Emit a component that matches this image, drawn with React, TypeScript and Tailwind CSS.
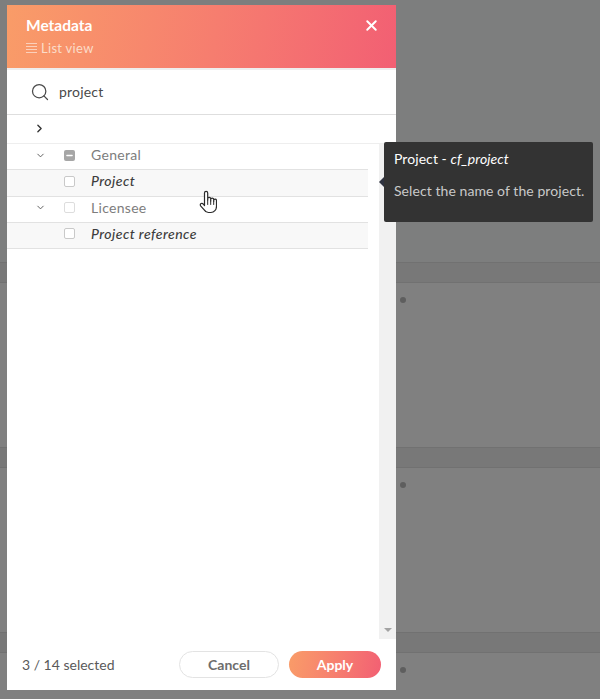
import { ChevronDown, ChevronRight, Minus, Search, X } from 'lucide-react';

const font = "font-['Lato','Noto_Sans',sans-serif]";

// greyed page behind the dialog
const BackgroundSection = () => (
  <div className="h-[185px]">
    <div className="h-[21px] border-y border-[#717171] bg-[#787878]" />
    <div className="flex pl-[400px] pt-[14px]">
      <span className="h-[6px] w-[6px] rounded-full bg-[#5e5e5e]" />
    </div>
  </div>
);

const HandCursor = () => (
  <svg width="18" height="25" viewBox="0 0 18 25" className="block">
    <path
      d="M5.5 15.5V3a1.6 1.6 0 0 1 3.2 0v7m0-1.2a1.5 1.5 0 0 1 3 0V11m0-1.4a1.5 1.5 0 0 1 3 0v1.6m0-.6a1.4 1.4 0 0 1 2.8 0v5.6c0 3.6-2.4 6.3-5.6 6.3H9.4c-2 0-3.2-.9-4.2-2.6L1.6 15.8c-.5-.9-.2-1.8.5-2.2.7-.4 1.6-.2 2.2.5l1.2 1.4"
      fill="#fff"
      stroke="#2b2b2b"
      strokeWidth="1.2"
      strokeLinecap="round"
      strokeLinejoin="round"
    />
    <path d="M8.7 10v4.5M11.7 11v3.5M14.7 11.2v3.3" stroke="#2b2b2b" strokeWidth="1" strokeLinecap="round" />
  </svg>
);

const Checkbox = ({ muted, mixed }: { muted?: boolean; mixed?: boolean }) =>
  mixed ? (
    <span className="flex h-[11px] w-[11px] items-center justify-center rounded-[2px] bg-[#a6a6a6]">
      <Minus className="h-[9px] w-[9px] text-white" strokeWidth={3.5} />
    </span>
  ) : (
    <span className={`h-[11px] w-[11px] rounded-[2px] border bg-white ${muted ? 'border-[#dddddd]' : 'border-[#c9c9c9]'}`} />
  );

const GroupRow = ({ label, mixed }: { label: string; mixed?: boolean }) => (
  <div className="flex h-[26.25px] items-center border-b border-[#e2e2e2] pb-[3px]">
    <ChevronDown className="ml-[28px] h-[11px] w-[11px] text-[#555555]" strokeWidth={2} />
    <div className="ml-[18px] flex w-[11px]">
      <Checkbox mixed={mixed} muted />
    </div>
    <span className="mb-[1px] ml-[16px] text-[14px] tracking-[0.3px] text-[#7d7d7d]">{label}</span>
  </div>
);

const FieldRow = ({ label }: { label: string }) => (
  <div className="flex h-[26.25px] items-center border-b border-[#e2e2e2] bg-[#f8f8f8] pb-[3px] pl-[57px]">
    <Checkbox />
    <span className="mb-[1px] ml-[16px] text-[14px] font-medium italic tracking-[0.45px] text-[#3d3d3d]">{label}</span>
  </div>
);

export default function App() {
  return (
    <div className={`relative h-[699px] w-[600px] overflow-hidden bg-[#808080] ${font}`}>
      <div className="h-[262px] bg-[#7d7e7e]" />
      <BackgroundSection />
      <BackgroundSection />
      <BackgroundSection />

      {/* dialog */}
      <div className="absolute left-[7px] top-[5px] flex h-[685px] w-[389px] flex-col bg-white">
        <div className="relative h-[63px] shrink-0 bg-linear-100 from-[#f99c68] to-[#f25f73] pl-[19px] pt-[10px] text-white">
          <div className="text-[15.5px] font-bold leading-[20px]">Metadata</div>
          <div className="mt-[4px] flex items-center text-[13px] leading-[18px] tracking-[0.3px] text-[#fbdcc9]">
            <span className="mr-[4px] flex w-[11px] flex-col gap-[2.3px]">
              <span className="h-px bg-[#fbd0bb]" />
              <span className="h-px bg-[#fbd0bb]" />
              <span className="h-px bg-[#fbd0bb]" />
              <span className="h-px bg-[#fbd0bb]" />
            </span>
            List view
          </div>
          <X className="absolute right-[16px] top-[12px] h-[17px] w-[17px] text-white" strokeWidth={2.75} />
        </div>

        <div className="h-[2px] shrink-0 bg-[#eeeeee]" />
        <div className="flex h-[45px] shrink-0 items-center border-b border-[#dedede] pl-[23px]">
          <Search className="h-[20px] w-[20px] text-[#4a4a4a]" strokeWidth={1.5} />
          <span className="mb-[2px] ml-[9px] text-[14px] tracking-[0.2px] text-[#4a4a4a]">project</span>
        </div>

        <div className="flex h-[29px] shrink-0 items-center border-b border-[#eeeeee] pb-[2px] pl-[26px]">
          <ChevronRight className="h-[13px] w-[13px] text-[#333333]" strokeWidth={2.5} />
        </div>

        <div className="flex min-h-0 flex-1">
          <div className="w-[361px]">
            <GroupRow label="General" mixed />
            <FieldRow label="Project" />
            <GroupRow label="Licensee" />
            <FieldRow label="Project reference" />
          </div>
          <div className="ml-[11px] flex w-[17px] flex-col justify-end bg-[#f1f1f1] pb-[7px]">
            <span className="mx-auto h-0 w-0 border-x-[4px] border-t-[4px] border-x-transparent border-t-[#a3a3a3]" />
          </div>
        </div>

        <div className="flex h-[51px] shrink-0 items-center pl-[15px] pr-[15px]">
          <span className="flex-1 text-[14px] text-[#5a5a5a]">3 / 14 selected</span>
          <button className="h-[27px] w-[100px] rounded-full border border-[#e3e3e3] bg-white text-[14px] font-bold text-[#6d6d6d]">
            Cancel
          </button>
          <button className="ml-[10px] h-[27px] w-[92px] rounded-full bg-linear-100 from-[#f99c68] to-[#f25f73] text-[14px] font-bold text-white">
            Apply
          </button>
        </div>
      </div>

      {/* tooltip */}
      <div className="absolute left-[384px] top-[142px] h-[80px] w-[209px] rounded-[2px] bg-[#333333] pl-[10px] pt-[8px] text-[14px] leading-[18px] tracking-[0.07px]">
        <span className="absolute -left-[5px] top-[35px] h-0 w-0 border-y-[5px] border-r-[5px] border-y-transparent border-r-[#2f3340]" />
        <div className="text-white">
          Project - <span className="italic">cf_project</span>
        </div>
        <div className="mt-[14px] text-[#c9c9c9]">Select the name of the project.</div>
      </div>

      <div className="absolute left-[199px] top-[190px]">
        <HandCursor />
      </div>
    </div>
  );
}
